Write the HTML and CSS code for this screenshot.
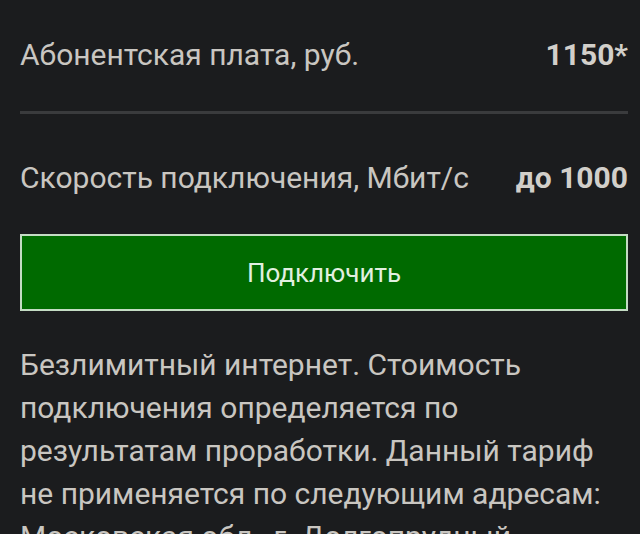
FILE: index.html
```html
<!DOCTYPE html>
<html lang="ru">
<head>
<meta charset="utf-8">
<link rel="stylesheet" href="styles.css">
</head>
<body>
<div class="page">
  <div class="row row-first">
    <span class="label">Абонентская плата, руб.</span>
    <span class="value">1150*</span>
  </div>
  <div class="divider"></div>
  <div class="row row-second">
    <span class="label">Скорость подключения, Мбит/с</span>
    <span class="value">до 1000</span>
  </div>
  <button class="connect">Подключить</button>
  <p class="desc">Безлимитный интернет. Стоимость подключения определяется по результатам проработки. Данный тариф не применяется по следующим адресам: Московская обл., г. Долгопрудный</p>
</div>
</body>
</html>
```
FILE: styles.css
```css
html, body {
  margin: 0;
  padding: 0;
  background: #1b1c1e;
  height: 100%;
  overflow: hidden;
}
.page {
  padding: 0 12px 0 20px;
  font-family: "Roboto", sans-serif;
  color: #c9c6c1;
}
.row {
  display: flex;
  justify-content: space-between;
  align-items: baseline;
  font-size: 30px;
  line-height: 36px;
}
.row-first {
  padding-top: 37px;
  height: 80px;
  box-sizing: border-box;
}
.value {
  font-weight: bold;
  color: #d2cfca;
}
.divider {
  height: 3px;
  background: #3a3b3d;
  margin-top: 31px;
}
.row-second {
  margin-top: 46px;
}
.connect {
  display: block;
  width: 100%;
  height: 77px;
  margin-top: 38px;
  background: #006a00;
  border: 2px solid #c4dcc4;
  color: #e2f0e0;
  font-family: inherit;
  font-size: 26px;
  padding: 0;
}
.desc {
  margin: 32px 0 0 0;
  font-size: 30px;
  line-height: 43px;
  padding-right: 0;
}
```
